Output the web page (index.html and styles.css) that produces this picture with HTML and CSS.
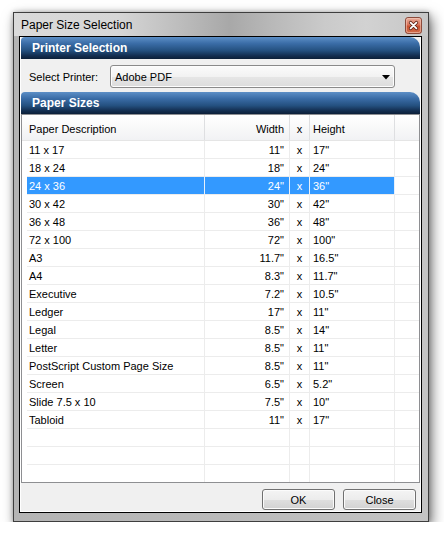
FILE: index.html
```html
<!DOCTYPE html>
<html>
<head>
<meta charset="utf-8">
<title>Paper Size Selection</title>
<link rel="stylesheet" href="styles.css">
</head>
<body>
<div class="desk">
  <div class="window">
    <div class="titlebar">
      <span class="title">Paper Size Selection</span>
      <span class="close">
        <svg width="17" height="17" viewBox="0 0 17 17">
          <defs>
            <linearGradient id="cg" x1="0" y1="0" x2="0" y2="1">
              <stop offset="0" stop-color="#eab3a2"/>
              <stop offset="0.45" stop-color="#d9735a"/>
              <stop offset="0.55" stop-color="#c8502f"/>
              <stop offset="1" stop-color="#d2704f"/>
            </linearGradient>
          </defs>
          <rect x="0.5" y="0.5" width="16" height="16" rx="2.5" fill="url(#cg)" stroke="#8b4a3b"/>
          <rect x="1.5" y="1.5" width="14" height="14" rx="1.8" fill="none" stroke="#f3c9bb" stroke-opacity="0.6"/>
          <path d="M5.6 5.6 L11.4 11.4 M11.4 5.6 L5.6 11.4" stroke="#5a2418" stroke-width="3.4" stroke-linecap="round"/>
          <path d="M5.6 5.6 L11.4 11.4 M11.4 5.6 L5.6 11.4" stroke="#ffffff" stroke-width="1.8" stroke-linecap="round"/>
        </svg>
      </span>
    </div>
    <div class="client">
      <div class="client-inner">
        <div class="section-head">Printer Selection</div>
        <div class="printer-row">
          <span class="label">Select Printer:</span>
          <div class="select">
            <span class="select-text">Adobe PDF</span>
            <svg class="arrow" width="8" height="5" viewBox="0 0 8 5"><path d="M0 0 H8 L4 4.5 Z" fill="#000"/></svg>
          </div>
        </div>
        <div class="section-head">Paper Sizes</div>
        <div class="grid">
          <div class="row head">
            <div class="cell c-desc">Paper Description</div>
            <div class="cell c-w">Width</div>
            <div class="cell c-x">x</div>
            <div class="cell c-h">Height</div>
            <div class="cell c-fill"></div>
          </div>
          <div class="row"><div class="cell c-desc">11 x 17</div><div class="cell c-w">11"</div><div class="cell c-x">x</div><div class="cell c-h">17"</div><div class="cell c-fill"></div></div>
          <div class="row"><div class="cell c-desc">18 x 24</div><div class="cell c-w">18"</div><div class="cell c-x">x</div><div class="cell c-h">24"</div><div class="cell c-fill"></div></div>
          <div class="row sel"><div class="cell c-desc">24 x 36</div><div class="cell c-w">24"</div><div class="cell c-x">x</div><div class="cell c-h">36"</div><div class="cell c-fill"></div></div>
          <div class="row"><div class="cell c-desc">30 x 42</div><div class="cell c-w">30"</div><div class="cell c-x">x</div><div class="cell c-h">42"</div><div class="cell c-fill"></div></div>
          <div class="row"><div class="cell c-desc">36 x 48</div><div class="cell c-w">36"</div><div class="cell c-x">x</div><div class="cell c-h">48"</div><div class="cell c-fill"></div></div>
          <div class="row"><div class="cell c-desc">72 x 100</div><div class="cell c-w">72"</div><div class="cell c-x">x</div><div class="cell c-h">100"</div><div class="cell c-fill"></div></div>
          <div class="row"><div class="cell c-desc">A3</div><div class="cell c-w">11.7"</div><div class="cell c-x">x</div><div class="cell c-h">16.5"</div><div class="cell c-fill"></div></div>
          <div class="row"><div class="cell c-desc">A4</div><div class="cell c-w">8.3"</div><div class="cell c-x">x</div><div class="cell c-h">11.7"</div><div class="cell c-fill"></div></div>
          <div class="row"><div class="cell c-desc">Executive</div><div class="cell c-w">7.2"</div><div class="cell c-x">x</div><div class="cell c-h">10.5"</div><div class="cell c-fill"></div></div>
          <div class="row"><div class="cell c-desc">Ledger</div><div class="cell c-w">17"</div><div class="cell c-x">x</div><div class="cell c-h">11"</div><div class="cell c-fill"></div></div>
          <div class="row"><div class="cell c-desc">Legal</div><div class="cell c-w">8.5"</div><div class="cell c-x">x</div><div class="cell c-h">14"</div><div class="cell c-fill"></div></div>
          <div class="row"><div class="cell c-desc">Letter</div><div class="cell c-w">8.5"</div><div class="cell c-x">x</div><div class="cell c-h">11"</div><div class="cell c-fill"></div></div>
          <div class="row"><div class="cell c-desc">PostScript Custom Page Size</div><div class="cell c-w">8.5"</div><div class="cell c-x">x</div><div class="cell c-h">11"</div><div class="cell c-fill"></div></div>
          <div class="row"><div class="cell c-desc">Screen</div><div class="cell c-w">6.5"</div><div class="cell c-x">x</div><div class="cell c-h">5.2"</div><div class="cell c-fill"></div></div>
          <div class="row"><div class="cell c-desc">Slide 7.5 x 10</div><div class="cell c-w">7.5"</div><div class="cell c-x">x</div><div class="cell c-h">10"</div><div class="cell c-fill"></div></div>
          <div class="row"><div class="cell c-desc">Tabloid</div><div class="cell c-w">11"</div><div class="cell c-x">x</div><div class="cell c-h">17"</div><div class="cell c-fill"></div></div>
          <div class="row"><div class="cell c-desc"></div><div class="cell c-w"></div><div class="cell c-x"></div><div class="cell c-h"></div><div class="cell c-fill"></div></div>
          <div class="row"><div class="cell c-desc"></div><div class="cell c-w"></div><div class="cell c-x"></div><div class="cell c-h"></div><div class="cell c-fill"></div></div>
          <div class="row last"><div class="cell c-desc"></div><div class="cell c-w"></div><div class="cell c-x"></div><div class="cell c-h"></div><div class="cell c-fill"></div></div>
        </div>
        <div class="buttons">
          <button class="btn">OK</button>
          <button class="btn">Close</button>
        </div>
      </div>
    </div>
  </div>
</div>
</body>
</html>
```

FILE: styles.css
```css
html, body {
  margin: 0;
  padding: 0;
  background: #ffffff;
}

body {
  font-family: "Liberation Sans", Arial, sans-serif;
  font-size: 11px;
  color: #000;
}

.desk {
  padding: 12px 0 0 13px;
}

.window {
  box-sizing: border-box;
  width: 416px;
  height: 510px;
  border: 1px solid #3e3e3e;
  background: linear-gradient(90deg, #b4b4b4 0%, #bababa 50%, #c4c4c4 100%);
  box-shadow: 3px 5px 12px rgba(0, 0, 0, 0.55), 0 0 5px rgba(0, 0, 0, 0.25);
  display: flex;
  flex-direction: column;
}

.titlebar {
  height: 23px;
  display: flex;
  align-items: flex-start;
  justify-content: space-between;
  padding-left: 7px;
  background: linear-gradient(90deg, #dadada 0%, #d6d6d6 25%, #bdbdbd 40%, #a8a8a8 52%, #b8b8b8 62%, #cacaca 75%, #d2d2d2 85%, #c6c6c6 100%);
}

.title {
  font-size: 12px;
  line-height: 14px;
  margin-top: 5px;
  color: #000;
}

.close {
  width: 17px;
  height: 17px;
  margin-top: 4px;
  margin-right: 6px;
  display: block;
}

.close svg {
  display: block;
}

.client {
  margin: 0 6px 0 5px;
  border: 1px solid #000;
  padding: 0 1px 1px 1px;
  background: #ffffff;
  height: 477px;
  box-sizing: border-box;
}

.client-inner {
  background: #f0f0f0;
  height: 474px;
  display: flex;
  flex-direction: column;
}

.section-head {
  height: 22px;
  line-height: 22px;
  padding-left: 11px;
  color: #fff;
  font-weight: bold;
  font-size: 12px;
  border-radius: 4px 10px 0 0;
  background: linear-gradient(#5d8fc6 0%, #3a6ca6 30%, #24507f 62%, #132e50 85%, #0c1f38 100%);
  flex: none;
}

.printer-row {
  height: 33px;
  box-sizing: border-box;
  padding: 6px 0 4px 8px;
  display: flex;
  align-items: center;
  flex: none;
}

.label {
  width: 81px;
  flex: none;
}

.select {
  box-sizing: border-box;
  width: 285px;
  height: 23px;
  border: 1px solid #8a8a8a;
  border-radius: 3px;
  background: linear-gradient(#fbfbfb 0%, #f2f2f2 50%, #e6e6e6 51%, #dcdcdc 100%);
  box-shadow: inset 0 0 0 1px #fdfdfd;
  display: flex;
  align-items: center;
  justify-content: space-between;
  padding: 0 4px 0 4px;
}

.arrow {
  display: block;
  margin-top: 1px;
}

.grid {
  height: 369px;
  box-sizing: border-box;
  border: 1px solid #8e8f92;
  background: #fff;
  flex: none;
}

.row {
  display: flex;
  padding-left: 5px;
  height: 18px;
}

.cell {
  box-sizing: border-box;
  height: 18px;
  line-height: 17px;
  padding-top: 1px;
  border-bottom: 1px solid #ececec;
  border-right: 1px solid #ececec;
  white-space: nowrap;
  overflow: hidden;
}

.c-desc { width: 178px; padding-left: 2px; }
.c-w { width: 85px; text-align: right; padding-right: 5px; }
.c-x { width: 20px; text-align: center; }
.c-h { width: 85px; padding-left: 3px; }
.c-fill { width: 24px; border-right: none; }

.row.head {
  height: 26px;
  background: linear-gradient(#ffffff 0%, #fafafa 40%, #f1f2f4 100%);
  border-bottom: 1px solid #e5e5e5;
  box-sizing: border-box;
}

.row.head .cell {
  height: 25px;
  border-bottom: none;
  border-right: 1px solid #dedfe1;
  padding-top: 6px;
  line-height: 17px;
}

.row.head .c-fill {
  border-right: none;
}

.row.sel .cell {
  background: #3399ff;
  color: #fff;
  border-right-color: #e6f0fb;
}

.row.sel .c-fill {
  background: #fff;
}

.row.last,
.row.last .cell {
  height: 17px;
}

.row.last .cell {
  border-bottom: none;
}

.buttons {
  flex: 1;
  display: flex;
  justify-content: flex-end;
  align-items: flex-start;
  gap: 8px;
  padding: 6px 4px 0 0;
}

.btn {
  box-sizing: border-box;
  width: 73px;
  height: 21px;
  border: 1px solid #707070;
  border-radius: 3px;
  background: linear-gradient(#f4f4f4 0%, #ececec 50%, #dfdfdf 51%, #d2d2d2 100%);
  box-shadow: inset 0 0 0 1px #fbfbfb;
  font-family: "Liberation Sans", Arial, sans-serif;
  font-size: 11px;
  color: #000;
  padding: 0;
  margin: 0;
}
```
